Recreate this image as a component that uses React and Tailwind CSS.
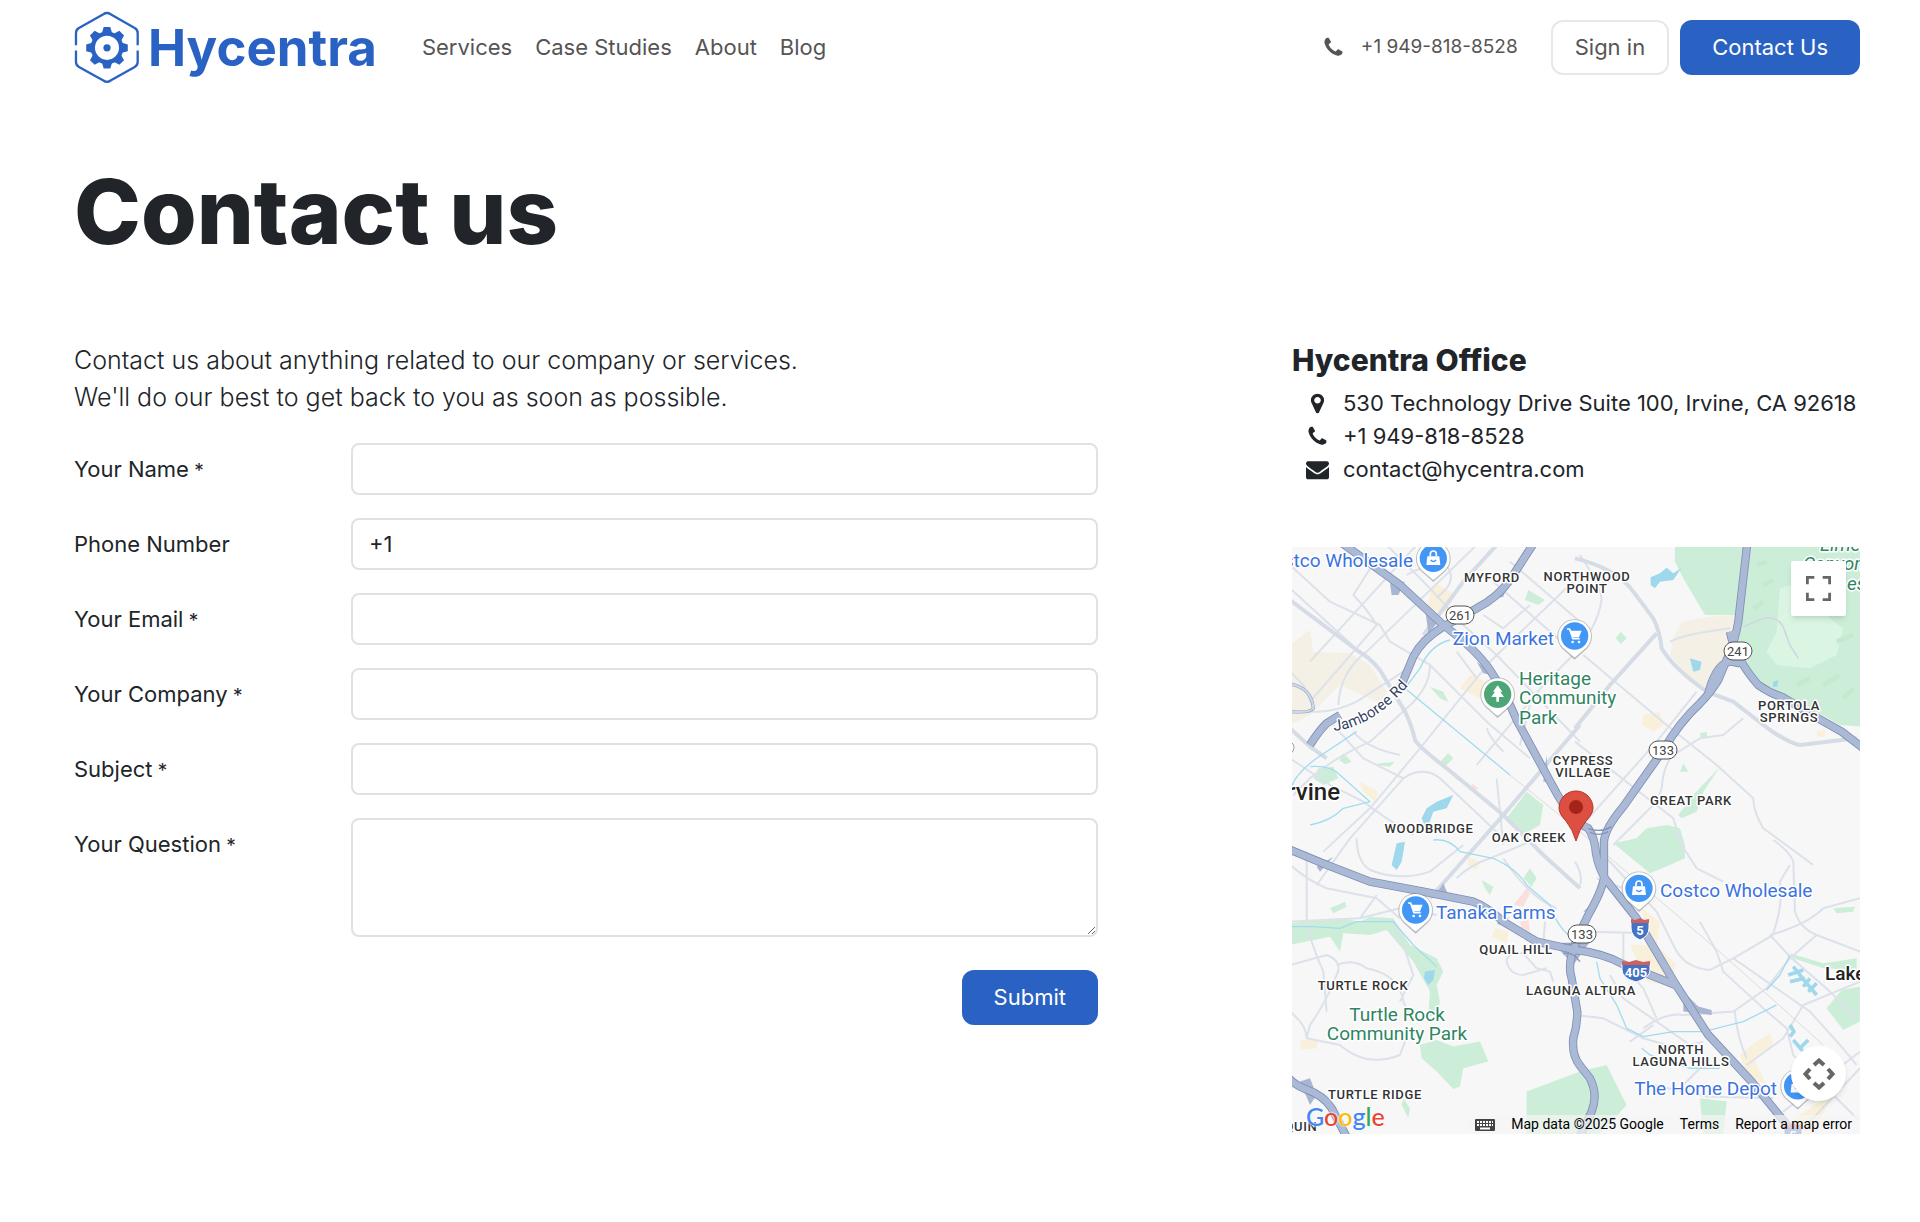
import React, { useState } from "react";

const NAV_LINKS = ["Services", "Case Studies", "About", "Blog"];

const FIELDS = [
  { name: "name", label: "Your Name", type: "text", required: true },
  { name: "phone", label: "Phone Number", type: "tel", required: false },
  { name: "email", label: "Your Email", type: "email", required: true },
  { name: "company", label: "Your Company", type: "text", required: true },
  { name: "subject", label: "Subject", type: "text", required: true },
];

function PhoneIcon({ className }) {
  return (
    <svg viewBox="0 0 1792 1792" fill="currentColor" aria-hidden="true" className={className}>
      <path d="M1600 1240q0 27-10 70.5t-21 68.5q-21 50-122 106-94 51-186 51-27 0-53-3.5t-57.5-12.5-47-14.5-55.5-20.5-49-18q-98-35-175-83-127-79-264-216t-216-264q-48-77-83-175-3-9-18-49t-20.5-55.5-14.5-47-12.5-57.5-3.5-53q0-92 51-186 56-101 106-122 25-11 68.5-21t70.5-10q14 0 21 3 18 6 53 76 11 19 30 54t35 63.5 31 53.5q3 4 17.5 25t21.5 35.5 7 28.5q0 20-28.5 50t-62 55-62 53-28.5 46q0 9 5 22.5t8.5 20.5 14 24 11.5 19q76 137 174 235t235 174q2 1 19 11.5t24 14 20.5 8.5 22.5 5q18 0 46-28.5t53-62 55-62 50-28.5q14 0 28.5 7t35.5 21.5 25 17.5q25 15 53.5 31t63.5 35 54 30q70 35 76 53 3 7 3 21z" />
    </svg>
  );
}

function MarkerIcon({ className }) {
  return (
    <svg viewBox="0 0 1792 1792" fill="currentColor" aria-hidden="true" className={className}>
      <path d="M1152 640q0-106-75-181t-181-75-181 75-75 181 75 181 181 75 181-75 75-181zm256 0q0 109-33 179l-364 774q-16 33-47.5 52t-67.5 19-67.5-19-46.5-52l-365-774q-33-70-33-179 0-212 150-362t362-150 362 150 150 362z" />
    </svg>
  );
}

function EnvelopeIcon({ className }) {
  return (
    <svg viewBox="0 0 1792 1792" fill="currentColor" aria-hidden="true" className={className}>
      <path d="M1792 710v794q0 66-47 113t-113 47h-1472q-66 0-113-47t-47-113v-794q44 49 101 87 362 246 497 345 57 42 92.5 65.5t94.5 48 110 24.5h2q51 0 110-24.5t94.5-48 92.5-65.5q170-123 498-345 57-39 100-87zm0-294q0 79-49 151t-122 123q-376 261-468 325-10 7-42.5 31t-54 38.5-52 32.5-57.5 27-50 9h-2q-23 0-50-9t-57.5-27-52-32.5-54-38.5-42.5-31q-91-64-262-182.5t-205-142.5q-62-42-117-115.5t-55-136.5q0-78 41.5-130t118.5-52h1472q65 0 112.5 47t47.5 113z" />
    </svg>
  );
}

function Logo() {
  return (
    <a href="#home" className="flex items-center gap-2 text-[#2a62c4]" aria-label="Hycentra">
      <svg viewBox="10 16 200 220" className="h-[73px] w-[66px]" aria-hidden="true">
        <g fill="none" stroke="currentColor" strokeWidth="7" strokeLinecap="butt">
          <path d="M16 119V82Q16 72 25 67L99 25Q110 18 121 25L194 67Q203 72 203 82V119" />
          <path d="M16 135V170Q16 180 25 185L99 226Q110 234 121 226L194 185Q203 180 203 170V135" />
        </g>
        <g fill="currentColor">
          {[0, 45, 90, 135, 180, 225, 270, 315].map((angle) => (
            <path
              key={angle}
              d="M94 84L100 64H120L126 84Z"
              transform={`rotate(${angle} 110 127)`}
            />
          ))}
          <circle cx="110" cy="127" r="11" />
        </g>
        <circle cx="110" cy="127" r="43" fill="none" stroke="currentColor" strokeWidth="13" />
      </svg>
      <span className="text-[51px] leading-none font-bold">Hycentra</span>
    </a>
  );
}

function Header() {
  return (
    <header className="flex items-center justify-between pt-[11px] text-[#555]">
      <div className="flex items-center gap-[45px]">
        <Logo />
        <nav className="flex items-center gap-[23px] text-[22px]">
          {NAV_LINKS.map((link) => (
            <a key={link} href="#nav" className="hover:text-black">
              {link}
            </a>
          ))}
        </nav>
      </div>
      <div className="flex items-center">
        <a href="tel:+19498188528" className="mr-[33px] flex items-center gap-4 text-[19px]">
          <PhoneIcon className="size-[23px]" />
          +1 949-818-8528
        </a>
        <a
          href="#signin"
          className="mr-[11px] rounded-xl border-2 border-[#e7e8ea] px-[22px] py-[9px] text-[22px]"
        >
          Sign in
        </a>
        <button
          type="button"
          className="rounded-xl bg-[#2a62c4] px-8 py-[11px] text-[22px] text-white"
        >
          Contact Us
        </button>
      </div>
    </header>
  );
}

function FieldLabel({ htmlFor, required, children }) {
  return (
    <label htmlFor={htmlFor} className="w-[277px] shrink-0 pt-[10px] text-[22px]">
      {children}
      {required && <span className="text-[19px]"> *</span>}
    </label>
  );
}

function ContactForm() {
  const [formData, setFormData] = useState({
    name: "",
    phone: "+1",
    email: "",
    company: "",
    subject: "",
    question: "",
  });

  const handleChange = (e) => {
    const { name, value } = e.target;
    setFormData((prev) => ({ ...prev, [name]: value }));
  };

  const handleSubmit = (e) => {
    e.preventDefault();
  };

  return (
    <form onSubmit={handleSubmit} className="mt-[27px] flex flex-col gap-[23px]">
      {FIELDS.map((field) => (
        <div key={field.name} className="flex items-start">
          <FieldLabel htmlFor={field.name} required={field.required}>
            {field.label}
          </FieldLabel>
          <input
            id={field.name}
            name={field.name}
            type={field.type}
            value={formData[field.name]}
            onChange={handleChange}
            className="h-[52px] min-w-0 flex-1 rounded-lg border-2 border-[#dee2e6] px-4 text-[22px]"
          />
        </div>
      ))}
      <div className="flex items-start">
        <FieldLabel htmlFor="question" required>
          Your Question
        </FieldLabel>
        <textarea
          id="question"
          name="question"
          value={formData.question}
          onChange={handleChange}
          className="h-[119px] min-w-0 flex-1 resize-y rounded-lg border-2 border-[#dee2e6] px-4 py-2 text-[22px]"
        />
      </div>
      <button
        type="submit"
        className="mt-[10px] self-end rounded-xl bg-[#2a62c4] px-8 py-[11px] text-[22px] text-white"
      >
        Submit
      </button>
    </form>
  );
}

const FREEWAYS = [
  "M150 -10L330 120L460 240Q560 315 600 375Q650 450 680 525L800 745Q850 830 895 850Q915 880 918 925Q925 965 945 1000L1040 1120L1155 1315L1255 1470L1385 1610L1520 1775",
  "M728 0L660 105Q620 160 560 190L460 245Q395 285 370 335L330 430",
  "M150 510L110 535Q85 560 60 600",
  "M1372 -5L1345 230Q1335 290 1310 345L1285 405Q1260 445 1230 475Q1170 530 1120 615L1000 785Q945 850 942 890V1000Q935 1040 895 1110Q860 1180 845 1230Q835 1270 845 1300L862 1400Q862 1440 850 1480Q845 1530 870 1562L900 1600Q925 1650 905 1700L870 1775",
  "M1320 260Q1335 340 1405 420Q1440 445 1475 455L1575 515L1655 560L1720 610",
  "M1255 445Q1280 350 1325 350L1350 355",
  "M-5 912L110 960L240 1010L400 1040L550 1070Q590 1085 640 1130L740 1190L855 1215Q940 1225 1000 1258L1080 1290L1155 1320",
  "M-5 1598Q15 1620 45 1632Q100 1650 125 1690L172 1780",
];

const ARTERIALS = [
  "M0 165L200 315Q260 350 285 400L345 500Q365 540 375 585Q385 605 470 670L640 810L760 930L870 1030",
  "M620 0L520 110Q440 220 400 270",
  "M870 540L640 810L420 1060",
  "M855 40Q980 70 1030 140L1090 220Q1110 260 1115 310Q1150 370 1250 440L1330 470L1440 555Q1500 595 1530 600L1700 580",
  "M1100 265L960 420L855 550",
  "M0 550L60 605L110 640",
];

const STREETS = [
  "M0 130L230 340M0 60L120 170L270 240L300 290L420 360L590 530L720 640",
  "M380 0L60 350M560 0L230 320Q150 380 145 480M0 380L40 420L70 490",
  "M260 40L190 150Q230 190 260 240L60 470M290 0L420 130L520 240L620 330L870 590",
  "M350 90Q420 50 470 70M460 50Q500 90 470 130L440 160",
  "M720 180L640 250L580 210M870 90L600 350L390 610L240 790L100 920",
  "M610 110L860 330M660 50L870 230",
  "M870 310L760 420L560 660M420 360Q420 430 350 490L240 590Q130 640 60 700L0 760",
  "M0 500L80 500Q140 500 200 470L340 380M190 560Q230 610 330 630",
  "M0 640L120 720L220 770Q300 830 370 870M130 540L220 640L340 700Q400 660 450 700L640 880",
  "M640 620Q600 580 590 550M720 480L690 600M500 320L560 400M620 700L640 900",
  "M340 700L180 880L80 1020M200 880Q200 950 240 975Q330 1010 420 980L520 900",
  "M0 960Q60 1010 110 1030L260 1060L330 1120M50 920L50 1130M0 1260L110 1230Q160 1250 140 1290Q110 1370 60 1440L50 1480",
  "M50 1130Q60 1190 100 1280L110 1400M140 1260Q190 1240 230 1270Q330 1290 340 1370L370 1430",
  "M0 1130L210 1120L330 1090L440 1110M310 1130L350 1230L370 1290L330 1370",
  "M0 1400Q50 1440 50 1480L150 1500Q230 1570 330 1530L360 1450",
  "M260 1050L210 1120M650 1250Q660 1290 700 1290L770 1270M650 1250Q650 1220 700 1225L740 1270L780 1280L790 1310",
  "M870 30Q930 120 935 160Q930 210 900 260L855 300",
  "M880 330L1130 540L1280 660L1390 760Q1390 800 1420 850L1570 960",
  "M855 590L1060 750L1150 820L1175 900L1220 970L1300 1010",
  "M1220 440L1100 590L860 860M1360 520L1300 570L1230 580L1150 630Q1120 660 1115 730L1100 770L970 900",
  "M1140 290Q1180 270 1250 260L1320 250",
  "M1450 885Q1500 920 1510 950L1515 1100Q1530 1150 1580 1170L1710 1220M1710 1060L1600 1090Q1550 1140 1440 1170",
  "M1450 1165Q1480 1080 1470 1010L1500 960M1580 1170L1500 1240L1430 1330L1330 1400L1180 1410Q1130 1400 1060 1450",
  "M950 940L1100 1100L1150 1200Q1180 1270 1260 1275L1330 1240L1450 1170",
  "M1230 1130L1280 1220L1300 1280L1420 1390L1490 1450L1510 1530L1700 1720",
  "M1440 1170L1500 1235L1620 1340L1700 1420M1330 1240L1560 1400L1650 1500L1700 1560",
  "M855 1410L940 1420L1060 1480L1130 1500M960 1290L1000 1360L1100 1430L1200 1500L1240 1490",
  "M1020 1490L1090 1440M1000 1160L1000 1260L1060 1330L1100 1420M900 1160L1080 1165",
  "M1370 1560L1480 1480L1540 1380L1710 1310M1335 1400Q1340 1470 1370 1540",
  "M1560 1730L1710 1570M1090 1620L1250 1655L1450 1660M1480 1700L1710 1520",
  "M920 1000L1000 1030L1040 1110M855 950Q880 990 870 1020M1240 1560L1180 1620",
  "M500 1000Q540 960 600 940L720 890M640 940Q720 1060 800 1090M760 1200L765 1130",
];

const PARKS = [
  "M1155 0H1372L1337 210H1245L1180 100L1155 50Z",
  "M1372 0H1720V545L1650 540L1560 490L1440 430L1370 380L1340 290Z",
  "M710 740L760 780L750 840L700 870L650 820Z",
  "M85 670L130 665L145 700L100 720L70 700Z",
  "M715 135L765 165L745 180L705 165Z",
  "M420 425L460 440L475 470L450 460Z",
  "M475 625L490 640L465 665L450 650Z",
  "M160 625L185 650L165 658L148 645Z",
  "M270 655L315 650L300 665L260 660Z",
  "M1290 665L1215 745L1165 810L1175 820L1220 800L1240 740Z",
  "M970 895L1040 880L1070 850L1130 840L1170 850L1185 900V940L1140 960L1080 985Z",
  "M993 260L1010 280L993 297L977 280Z",
  "M0 1135L160 1120L210 1130L240 1115L310 1120L360 1200L440 1240L460 1280L440 1320L450 1370L440 1420L415 1410L420 1340L370 1250L290 1155L240 1170L160 1165L150 1220L120 1175L0 1200Z",
  "M390 1500L440 1485L490 1505L570 1490L595 1550L520 1570L510 1625L490 1632L440 1580L395 1540Z",
  "M710 1640L870 1580L950 1560L1010 1680L930 1767H710Z",
  "M1655 1335L1710 1325V1430L1660 1455L1610 1390Z",
  "M1500 1225L1600 1255L1700 1240V1275L1600 1270L1510 1240Z",
  "M1630 1090L1695 1085L1690 1100L1640 1105Z",
  "M1230 1660L1310 1670L1300 1767H1240Z",
  "M340 1660L360 1690L355 1720L335 1680Z",
  "M120 1090L165 1070L170 1085L130 1105Z",
  "M720 970L740 1000L725 1025L700 1000Z",
  "M575 1005L610 1025L600 1050L585 1030Z",
  "M1180 655L1195 680L1170 680Z",
  "M1230 565L1250 560L1252 580L1232 580Z",
];

const SANDS = [
  "M60 255L70 320L180 325L240 360L290 440L280 480L150 420L60 510L0 540V300Z",
  "M1175 230L1260 215L1335 210L1300 350L1255 440L1200 400L1140 330L1150 280Z",
];

const BUILT_UP = [
  "M440 115L495 150L470 200L410 195L420 140Z",
  "M540 390L590 410L570 460L510 430Z",
  "M1060 510L1110 500L1120 540L1090 560L1055 540Z",
  "M1050 1085L1110 1130L1100 1200L1160 1260L1130 1320L1070 1310L1020 1200L1090 1200Z",
  "M1400 1490L1440 1465L1450 1500L1390 1540L1430 1620L1370 1590L1350 1530Z",
  "M1500 1730L1620 1650L1610 1690L1560 1767H1490Z",
  "M210 710L265 740L255 770L220 740Z",
  "M615 1150L655 1160L650 1195L605 1175Z",
  "M535 935L570 950L560 975L535 960Z",
  "M30 1485L85 1485L80 1510L35 1515Z",
  "M1580 560L1605 555L1605 575L1582 575Z",
];

const LAKES = [
  "M1082 97L1110 85L1130 68L1150 85L1175 68L1150 105L1110 110L1095 130L1082 120Z",
  "M1200 340L1235 350L1230 375L1210 380Z",
  "M490 750L470 790L430 800L410 855L395 820L410 790L440 770Z",
  "M320 895L345 890L335 950L320 975L305 960Z",
  "M405 1280L435 1275L430 1305L415 1320L402 1300Z",
  "M1450 410L1465 405L1462 425L1448 425Z",
];

const CREEKS = [
  "M480 285Q420 300 390 370L345 430L660 690",
  "M200 560L80 640Q10 690 0 740M60 665Q120 660 150 690L240 770L160 790Q120 830 60 840",
  "M430 885Q480 880 510 920L610 940Q680 970 710 1020L780 1080Q800 1140 835 1170",
  "M0 1145H70L150 1150L200 1130L310 1130L370 1200L440 1265",
  "M920 1250L930 1300L980 1380L1010 1450L1060 1475L1150 1460L1240 1460L1360 1430L1440 1390L1460 1380",
  "M1500 1230L1470 1290L1430 1335M1055 1510L1080 1530L1200 1570L1290 1570",
];

// Inlets of the two branching lakes near the east edge
const INLETS =
  "M1510 1265L1550 1315L1580 1350M1495 1290L1540 1275M1500 1310L1545 1300M1560 1300L1540 1325M1580 1315L1555 1340M1500 1440L1512 1460L1500 1475M1510 1485L1540 1520M1555 1485L1530 1510";

const AREA_LABELS = [
  { x: 200, y: 35, lines: ["MYFORD"] },
  { x: 295, y: 34, lines: ["NORTHWOOD", "POINT"] },
  { x: 291, y: 218, lines: ["CYPRESS", "VILLAGE"] },
  { x: 137, y: 286, lines: ["WOODBRIDGE"] },
  { x: 237, y: 295, lines: ["OAK CREEK"] },
  { x: 399, y: 258, lines: ["GREAT PARK"] },
  { x: 497, y: 163, lines: ["PORTOLA", "SPRINGS"] },
  { x: 224, y: 407, lines: ["QUAIL HILL"] },
  { x: 289, y: 448, lines: ["LAGUNA ALTURA"] },
  { x: 71, y: 443, lines: ["TURTLE ROCK"] },
  { x: 389, y: 507, lines: ["NORTH", "LAGUNA HILLS"] },
  { x: 83, y: 552, lines: ["TURTLE RIDGE"] },
  { x: 9, y: 584, lines: ["QUIN"] },
];

const STORE_LABELS = [
  { x: 121, y: 20, anchor: "end", text: "Costco Wholesale" },
  { x: 262, y: 98, anchor: "end", text: "Zion Market" },
  { x: 144, y: 372, anchor: "start", text: "Tanaka Farms" },
  { x: 368, y: 350, anchor: "start", text: "Costco Wholesale" },
  { x: 485, y: 548, anchor: "end", text: "The Home Depot" },
];

const PINS = [
  { x: 430, y: 40, kind: "bag" },
  { x: 854, y: 273, kind: "cart" },
  { x: 623, y: 448, kind: "tree" },
  { x: 377, y: 1095, kind: "cart" },
  { x: 1047, y: 1030, kind: "bag" },
  { x: 1523, y: 1623, kind: "bag" },
];

const ROUTES = [
  { x: 168, y: 68, number: "261" },
  { x: 446, y: 104, number: "241" },
  { x: 371, y: 203, number: "133" },
  { x: 290, y: 387, number: "133" },
];

function MapPin({ x, y, kind }) {
  return (
    <g transform={`translate(${x} ${y})`}>
      <path d="M0 71L-37 38A52 52 0 1 1 37 38Z" fill="#7d828c" opacity="0.5" />
      <path d="M5 61Q0 66 -5 61L-36 34A49 49 0 1 1 36 34Z" fill="#fff" />
      <circle r="41" fill={kind === "tree" ? "#4da676" : "#4296f6"} />
      {kind === "bag" && (
        <g>
          <path d="M-18 -6H18L21 20H-21Z" fill="#fff" />
          <path d="M-9 -6V-13A9 9 0 0 1 9 -13V-6" fill="none" stroke="#fff" strokeWidth="5" />
          <path d="M-8 5Q0 14 8 5" fill="none" stroke="#4296f6" strokeWidth="4" />
        </g>
      )}
      {kind === "cart" && (
        <g>
          <path d="M-23 -21H-15L-5 8H15" fill="none" stroke="#fff" strokeWidth="5" />
          <path d="M-15 -16H21L13 4H-7Z" fill="#fff" />
          <circle cx="-6" cy="18" r="4" fill="#fff" />
          <circle cx="13" cy="18" r="4" fill="#fff" />
        </g>
      )}
      {kind === "tree" && (
        <path d="M0 -27L14 -8H8L19 8H4V22H-4V8H-19L-8 -8H-14Z" fill="#fff" />
      )}
    </g>
  );
}

function Interstate({ x, y, number, wide }) {
  const half = wide ? 14 : 9;
  return (
    <g transform={`translate(${x} ${y})`}>
      <path
        d={`M${-half} -7V-1Q${-half} 7 0 11Q${half} 7 ${half} -1V-7Z`}
        fill="#4472c4"
        stroke="#fff"
      />
      <path d={`M${-half} -10L${-half / 2} -9L0 -11L${half / 2} -9L${half} -10V-6H${-half}Z`} fill="#d0605e" />
      <text y="6" textAnchor="middle" className="fill-white text-[13px] font-bold">
        {number}
      </text>
    </g>
  );
}

function MapDrawing() {
  return (
    <svg
      viewBox="0 0 568 587"
      preserveAspectRatio="xMidYMid slice"
      className="block h-auto w-full font-[Roboto,sans-serif]"
      role="img"
      aria-label="Map of Irvine, California"
    >
      <rect width="568" height="587" fill="#f7f7f7" />
      {/* Terrain and roads are plotted on a grid three times finer than the labels */}
      <g transform="translate(-2 -2) scale(0.3333)" strokeLinejoin="round" fill="none">
        <g fill="#f5f0e5">{SANDS.map((d) => <path key={d} d={d} />)}</g>
        <g fill="#f9f0db">{BUILT_UP.map((d) => <path key={d} d={d} />)}</g>
        <g fill="#cceed8">{PARKS.map((d) => <path key={d} d={d} />)}</g>
        <path
          d="M1470 130L1540 110L1600 150L1620 220L1660 250L1640 330L1560 370L1460 360L1430 320L1460 260Z"
          fill="#daf6e3"
        />
        <path
          d="M1400 60L1430 50M1420 120L1450 105M1390 190L1420 170M1600 420L1650 390M1520 420L1560 400M1660 460L1690 430M1640 290L1690 270"
          stroke="#c4e9d1"
          strokeWidth="14"
        />
        <path
          d="M710 1030L720 1045L700 1085L670 1080ZM690 1130L715 1125L720 1160L695 1150ZM545 715L565 730L545 740Z"
          fill="#fbdfdc"
        />
        <g stroke="#dce1ea" strokeWidth="6">{STREETS.map((d) => <path key={d} d={d} />)}</g>
        <g stroke="#d5dce5" strokeWidth="12">{ARTERIALS.map((d) => <path key={d} d={d} />)}</g>
        <path
          d="M1360 245L1420 220Q1470 210 1485 260L1500 300L1525 340"
          stroke="#cfd6e2"
          strokeWidth="5"
        />
        <path d="M660 690L870 860L950 930L1300 1230L1600 1500" stroke="#dcdcdc" strokeWidth="3" />
        <g stroke="#a3dbee" strokeWidth="4">{CREEKS.map((d) => <path key={d} d={d} />)}</g>
        <g fill="#9fd8ec">{LAKES.map((d) => <path key={d} d={d} />)}</g>
        <path d={INLETS} stroke="#9fd8ec" strokeWidth="11" />
        <path d="M5 418Q65 430 70 490Q60 505 0 500" stroke="#8f9fc0" strokeWidth="9" />
        <path d="M5 418Q65 430 70 490Q60 505 0 500" stroke="#ced8e8" strokeWidth="6" />
        <g fill="#a9b6d2">
          <path d="M300 115L345 110L325 150L305 150ZM405 190L450 225L415 265ZM655 115L640 155L600 165Z" />
          <path d="M560 350L625 395L580 385ZM770 630L775 710L760 710ZM80 965L130 935L90 980Z" />
          <path d="M440 1045L460 1015L475 1050ZM620 1135L660 1115L630 1140ZM1180 1340V1400L1265 1410V1395L1225 1385Z" />
          <path d="M30 1610L60 1600L80 1650L60 1680ZM790 1195L900 1190L850 1260ZM880 1100L910 1070L905 1100Z" />
        </g>
        <g stroke="#7f8eb5" strokeWidth="25">{FREEWAYS.map((d) => <path key={d} d={d} />)}</g>
        <g stroke="#aab9d5" strokeWidth="20">{FREEWAYS.map((d) => <path key={d} d={d} />)}</g>
        <path
          d="M895 850Q930 865 965 845M900 862Q930 875 955 860M820 1195Q850 1205 870 1180M820 1225Q850 1220 870 1250"
          stroke="#8292b8"
          strokeWidth="4"
        />
        {PINS.map((pin) => (
          <MapPin key={`${pin.x}-${pin.y}`} {...pin} />
        ))}
        <circle cx="-8" cy="608" r="20" fill="#fff" stroke="#999" strokeWidth="3" />
      </g>

      {ROUTES.map(({ x, y, number }) => (
        <g key={`${number}-${y}`}>
          <rect x={x - 14} y={y - 9} width="28" height="18" rx="9" fill="#fff" stroke="#555" />
          <text x={x} y={y + 5} textAnchor="middle" className="fill-[#444] text-[13px]">
            {number}
          </text>
        </g>
      ))}
      <Interstate x={348} y={382} number="5" />
      <Interstate x={344} y={424} number="405" wide />
      <Interstate x={501} y={587} number="5" />

      <g stroke="#fff" strokeWidth="3" strokeLinejoin="round" paintOrder="stroke">
        {AREA_LABELS.map(({ x, y, lines }) => (
          <text
            key={lines[0]}
            textAnchor="middle"
            className="fill-[#333] text-[13px] font-medium tracking-wider"
          >
            {lines.map((line, i) => (
              <tspan key={line} x={x} y={y + i * 12}>
                {line}
              </tspan>
            ))}
          </text>
        ))}
        {STORE_LABELS.map(({ x, y, anchor, text }) => (
          <text key={`${text}-${y}`} x={x} y={y} textAnchor={anchor} className="fill-[#3b73e0] text-[19px]">
            {text}
          </text>
        ))}
        <g className="fill-[#2f8562] text-[19px]">
          <text>
            <tspan x="227" y="138">Heritage</tspan>
            <tspan x="227" y="157">Community</tspan>
            <tspan x="227" y="177">Park</tspan>
          </text>
          <text textAnchor="middle">
            <tspan x="105" y="474">Turtle Rock</tspan>
            <tspan x="105" y="493">Community Park</tspan>
          </text>
          <text className="italic">
            <tspan x="528" y="4">Limestone</tspan>
            <tspan x="511" y="23">Canyon</tspan>
            <tspan x="555" y="43">es</tspan>
          </text>
        </g>
        <path id="jamboree" d="M42 184Q80 180 115 140" fill="none" stroke="none" />
        <text className="fill-[#33415f] text-[15px]">
          <textPath href="#jamboree">Jamboree Rd</textPath>
        </text>
        <g className="fill-[#222] font-medium">
          <text x="48" y="253" textAnchor="end" className="text-[24px]">Irvine</text>
          <text x="533" y="433" className="text-[19px]">Lake Forest</text>
        </g>
      </g>

      {/* Office marker */}
      <g transform="translate(284 262)">
        <path
          d="M0 32Q-3 21 -10 12Q-17 5 -17 -1A17 17 0 1 1 17 -1Q17 5 10 12Q3 21 0 32Z"
          fill="#dc4f41"
          stroke="#b93328"
        />
        <circle r="7" cy="-2" fill="#a52419" />
      </g>
    </svg>
  );
}

function GoogleWordmark() {
  return (
    <a
      href="#google"
      className="absolute bottom-[5px] left-[14px] text-[25px] leading-none font-medium font-[Lato,sans-serif] [text-shadow:0_0_2px_white,0_0_2px_white]"
    >
      <span className="text-[#4285f4]">G</span>
      <span className="text-[#ea4335]">o</span>
      <span className="text-[#fbbc04]">o</span>
      <span className="text-[#4285f4]">g</span>
      <span className="text-[#34a853]">l</span>
      <span className="text-[#ea4335]">e</span>
    </a>
  );
}

function OfficeMap() {
  return (
    <div className="relative mt-[61px] overflow-hidden">
      <MapDrawing />
      <button
        type="button"
        aria-label="Toggle fullscreen view"
        className="absolute top-[14px] right-[14px] flex size-[55px] items-center justify-center rounded-xs bg-white shadow-md"
      >
        <svg viewBox="0 0 18 18" fill="#666" className="size-[25px]">
          <path d="M0 0v6h2V2h4V0H0zm16 0h-4v2h4v4h2V0h-2zm0 16h-4v2h6v-6h-2v4zM2 12H0v6h6v-2H2v-4z" />
        </svg>
      </button>
      <button
        type="button"
        aria-label="Map camera controls"
        className="absolute right-[14px] bottom-[33px] flex size-[55px] items-center justify-center rounded-full bg-white shadow-md"
      >
        <svg viewBox="0 0 32 32" fill="none" stroke="#666" strokeWidth="4" className="size-8">
          <path d="M11 7L16 2.500L21 7M11 25L16 29.500L21 25M7 11L2.500 16L7 21M25 11L29.500 16L25 21" />
        </svg>
      </button>
      <GoogleWordmark />
      <div className="absolute right-0 bottom-0 flex h-[19px] items-center gap-4 bg-[#f5f5f5]/70 px-2 text-[14px] text-black font-[Roboto,sans-serif]">
        <button type="button" aria-label="Keyboard shortcuts">
          <svg viewBox="0 0 20 12" className="h-3 w-5">
            <rect width="20" height="12" rx="1" fill="#444" />
            <path d="M2 3H18M2 6H18" stroke="#fff" strokeWidth="2" strokeDasharray="2 1" />
            <path d="M5 9.500H15" stroke="#fff" strokeWidth="2" />
          </svg>
        </button>
        <span>Map data ©2025 Google</span>
        <a href="#terms">Terms</a>
        <a href="#report">Report a map error</a>
      </div>
    </div>
  );
}

function OfficeInfo() {
  return (
    <aside>
      <h2 className="text-[30px] leading-9 font-extrabold">Hycentra Office</h2>
      <address className="mt-[9px] ml-[14px] text-[22px] leading-[33px] not-italic">
        <div className="flex items-center gap-[14px]">
          <MarkerIcon className="size-[23px]" />
          530 Technology Drive Suite 100, Irvine, CA 92618
        </div>
        <div className="flex items-center gap-[14px]">
          <PhoneIcon className="size-[23px]" />
          <a href="tel:+19498188528">+1 949-818-8528</a>
        </div>
        <div className="flex items-center gap-[14px]">
          <EnvelopeIcon className="size-[23px]" />
          <a href="mailto:contact@hycentra.com">contact@hycentra.com</a>
        </div>
      </address>
      <OfficeMap />
    </aside>
  );
}

function App() {
  return (
    <div className="bg-white pr-[60px] pl-[74px] font-[Inter,sans-serif] text-[#212529]">
      <Header />
      <main className="pb-20">
        <h1 className="mt-[75px] text-[90px] leading-[106px] font-extrabold">Contact us</h1>
        <div className="mt-[77px] grid grid-cols-[1024fr_568fr] gap-[194px]">
          <section>
            <p className="text-[25px] leading-[37px] font-light">
              Contact us about anything related to our company or services.
              <br />
              We'll do our best to get back to you as soon as possible.
            </p>
            <ContactForm />
          </section>
          <OfficeInfo />
        </div>
      </main>
    </div>
  );
}

export default App;
